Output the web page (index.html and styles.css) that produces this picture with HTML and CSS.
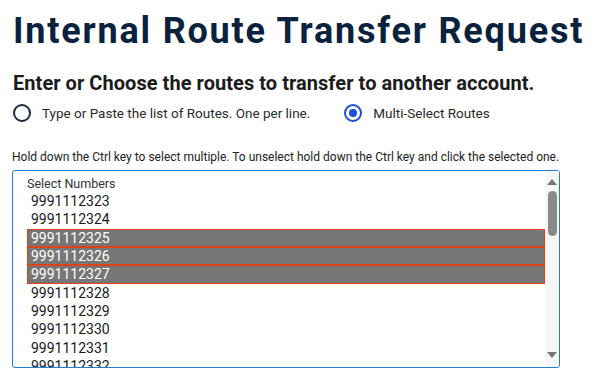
FILE: index.html
```html
<!DOCTYPE html>
<html lang="en">
<head>
<meta charset="utf-8">
<title>Internal Route Transfer Request</title>
<link rel="stylesheet" href="styles.css">
</head>
<body>
<main class="page">
  <h1 class="title">Internal Route Transfer Request</h1>
  <h2 class="subtitle">Enter or Choose the routes to transfer to another account.</h2>
  <div class="radios">
    <label class="radio"><span class="dot"></span><span class="radio-text">Type or Paste the list of Routes. One per line.</span></label>
    <label class="radio checked"><span class="dot"></span><span class="radio-text">Multi-Select Routes</span></label>
  </div>
  <p class="hint">Hold down the Ctrl key to select multiple. To unselect hold down the Ctrl key and click the selected one.</p>
  <div class="listbox">
    <div class="list">
      <div class="group">Select Numbers</div>
      <div class="opt">9991112323</div>
      <div class="opt">9991112324</div>
      <div class="opt sel">9991112325</div>
      <div class="opt sel">9991112326</div>
      <div class="opt sel">9991112327</div>
      <div class="opt">9991112328</div>
      <div class="opt">9991112329</div>
      <div class="opt">9991112330</div>
      <div class="opt">9991112331</div>
      <div class="opt">9991112332</div>
    </div>
    <div class="scrollbar">
      <span class="arrow up"></span>
      <span class="thumb"></span>
      <span class="track"></span>
      <span class="arrow down"></span>
    </div>
  </div>
</main>
</body>
</html>
```
FILE: styles.css
```css
html, body {
  margin: 0;
  padding: 0;
  background: #ffffff;
}
body {
  font-family: Roboto, "Liberation Sans", sans-serif;
  color: #1f1f1f;
  overflow: hidden;
}
.page {
  padding: 9px 0 0 13px;
  width: 600px;
}
.title {
  margin: 0;
  font-size: 36px;
  line-height: 44px;
  font-weight: 700;
  color: #0b223f;
  letter-spacing: 1.8px;
  white-space: nowrap;
}
.subtitle {
  margin: 18px 0 0 0;
  font-size: 20px;
  line-height: 24px;
  font-weight: 700;
  color: #1c1c1c;
  letter-spacing: 0.05px;
  white-space: nowrap;
}
.radios {
  display: flex;
  align-items: center;
  gap: 34px;
  margin-top: 8px;
  height: 20px;
}
.radio {
  display: flex;
  align-items: center;
  gap: 11px;
  font-size: 13.5px;
  color: #2a2a2a;
}
.dot {
  width: 14px;
  height: 14px;
  border: 2.2px solid #172a3e;
  border-radius: 50%;
  box-sizing: content-box;
  position: relative;
}
.checked .dot {
  border-color: #1a4fd6;
}
.checked .dot::after {
  content: "";
  position: absolute;
  left: 3px;
  top: 3px;
  width: 8px;
  height: 8px;
  border-radius: 50%;
  background: #1a4fd6;
}
.hint {
  margin: 27px 0 0 -1px;
  font-size: 12px;
  line-height: 14px;
  color: #222;
  white-space: nowrap;
}
.listbox {
  margin: 6px 0 0 -1px;
  width: 546px;
  height: 196px;
  border: 1px solid #1b7fd6;
  border-radius: 3px;
  display: flex;
  overflow: hidden;
}
.list {
  flex: 1;
  padding: 5px 0 0 14px;
}
.group {
  font-size: 12.5px;
  line-height: 16px;
  color: #333;
}
.opt {
  font-size: 14px;
  line-height: 16.33px;
  height: 16.33px;
  border: 1px solid transparent;
  padding-left: 3px;
  color: #1a1a1a;
}
.opt.sel {
  background: #777777;
  color: #ffffff;
  border-color: #e2401a;
}
.scrollbar {
  width: 14px;
  background: #f6f6f6;
  display: flex;
  flex-direction: column;
  align-items: center;
}
.arrow {
  width: 0;
  height: 0;
  border-left: 5px solid transparent;
  border-right: 5px solid transparent;
}
.arrow.up {
  margin-top: 8px;
  border-bottom: 6px solid #777;
}
.arrow.down {
  margin-bottom: 9px;
  border-top: 6px solid #777;
}
.thumb {
  margin-top: 6px;
  width: 9px;
  height: 45px;
  border-radius: 5px;
  background: #8a8a8a;
}
.track {
  flex: 1;
}
```
